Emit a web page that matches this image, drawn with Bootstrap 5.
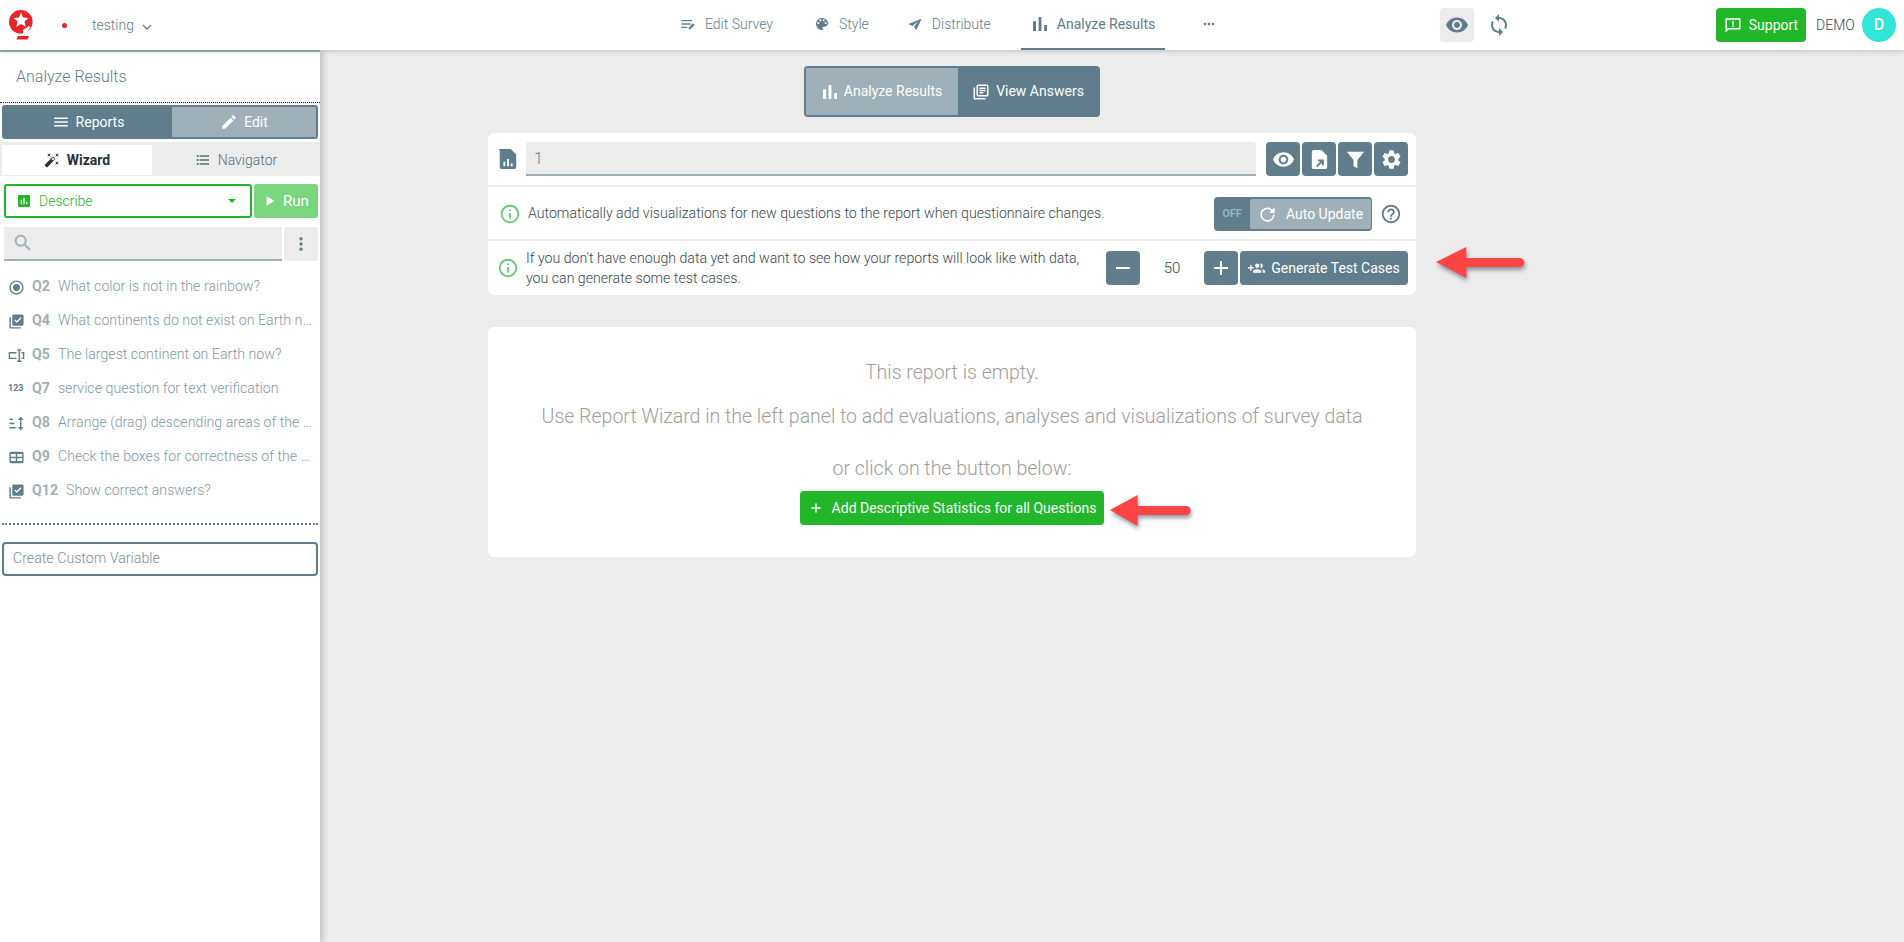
<!DOCTYPE html>
<html lang="en">
<head>
<meta charset="UTF-8">
<meta name="viewport" content="width=device-width, initial-scale=1">
<title>Analyze Results</title>
<link href="https://cdn.jsdelivr.net/npm/bootstrap@5.3.0/dist/css/bootstrap.min.css" rel="stylesheet">
<style>
    :root { --slate: #607d8b; --slate-light: #a0b0b8; --paper: #ececec; --leaf: #22b629; }
    body { font-family: Roboto, "Liberation Sans", sans-serif; font-weight: 300; font-size: 14px; background: var(--paper); color: #37474f; height: 100vh; overflow: hidden; }
    .ico { width: 1em; height: 1em; fill: currentColor; flex: none; }
    .top-bar { height: 50px; padding-right: 8px; background: #fff; box-shadow: 0 1px 5px rgba(0,0,0,.2); position: relative; z-index: 3; white-space: nowrap; }
    .brand-box { width: 669px; flex: none; padding-left: 9px; }
    .brand-dot { width: 5px; height: 5px; background: #e8232a; border-radius: 50%; margin-left: 29px; }
    .survey-name { color: var(--slate); margin-left: 25px; font-size: 14px; }
    .top-link { height: 50px; color: var(--slate); padding: 0 10px 0 11px; margin-right: 20px; gap: 9px; font-size: 14px; text-decoration: none; border-bottom: 2px solid transparent; flex: none; }
    .top-link.tight { margin-right: 17px; }
    .top-link.more { margin-left: 5px; margin-right: 0; }
    .top-link.now { border-bottom-color: var(--slate); font-weight: 400; }
    .top-link .ico { font-size: 16px; }
    .top-icon { width: 34px; height: 34px; border-radius: 4px; color: var(--slate); font-size: 24px; flex: none; }
    .top-icon.on { background: var(--paper); margin-left: auto; margin-right: 8px; }
    .btn-leaf { background: var(--leaf); color: #fff; border: 0; border-radius: 4px; height: 34px; font-size: 14px; font-weight: 400; padding: 0; }
    .btn-leaf:hover { background: var(--leaf); color: #fff; }
    .support-btn { width: 90px; margin-left: 200px; gap: 7px; flex: none; }
    .support-btn .ico { font-size: 18px; }
    .demo-name { margin-left: 10px; width: 46px; color: #37474f; flex: none; }
    .avatar { width: 34px; height: 34px; border-radius: 50%; background: #33e4d9; color: #fff; font-weight: 500; font-size: 16px; flex: none; }

    .work { height: calc(100vh - 50px); }
    .side { width: 320px; flex: none; background: #fff; border-top: 2px solid var(--slate-light); box-shadow: 3px 0 6px rgba(0,0,0,.18); position: relative; z-index: 2; }
    .side-title { height: 51px; padding-left: 16px; font-size: 16px; color: var(--slate); border-bottom: 1px dotted #222; margin-bottom: 2px; }
    .side-seg { margin: 0 2px; height: 34px; background: var(--slate); border-radius: 3px; padding: 2px; color: #fff; }
    .seg-part { flex: 1; gap: 6px; font-size: 14px; font-weight: 400; }
    .seg-part.lit { background: var(--slate-light); }
    .side-seg .seg-part { flex: none; width: 168px; }
    .side-seg .seg-part.lit { width: 144px; }
    .seg-part .ico { font-size: 18px; }
    .tab-strip { background: var(--paper); margin-top: 3px; padding: 3px 0 1px 2px; height: 34px; }
    .tab-part { flex: 1; gap: 7px; font-size: 14px; color: #546e7a; }
    .tab-part.lit { flex: none; width: 150px; background: #fff; color: #263238; font-weight: 700; }
    .tab-part .ico { font-size: 16px; }
    .run-row { margin: 8px 2px 0 4px; gap: 2px; height: 34px; }
    .pick-box { flex: 1; border: 2px solid var(--leaf); border-radius: 3px; color: var(--leaf); padding: 0 14px 0 10px; font-size: 14px; }
    .pick-box .ico { font-size: 16px; margin-right: 7px; }
    .pick-caret { margin-left: auto; border: 4px solid transparent; border-top-color: var(--leaf); border-bottom-width: 0; }
    .run-btn { width: 64px; background: #7ad67e; color: #fff; border-radius: 3px; gap: 6px; font-size: 15px; font-weight: 400; }
    .run-btn .ico { font-size: 14px; }
    .find-row { margin: 9px 2px 0 4px; gap: 2px; height: 34px; }
    .find-box { flex: 1; background: var(--paper); border-bottom: 2px solid var(--slate-light); color: var(--slate-light); padding-left: 8px; font-size: 22px; }
    .find-more { width: 34px; background: var(--paper); border-radius: 3px; color: var(--slate); font-size: 18px; }
    .q-list { margin: 9px 2px 0; padding-bottom: 15px; border-bottom: 2px dotted var(--slate); }
    .q-row { height: 34px; padding: 0 2px 0 6px; color: #829aa5; font-size: 14.2px; white-space: nowrap; overflow: hidden; }
    .q-ico { width: 17px; font-size: 17px; color: var(--slate); margin-right: 7px; flex: none; }
    .q-num { font-weight: 700; color: #a0b0b8; margin-right: 8px; flex: none; }
    .q-123 { font-size: 9px; font-weight: 700; }
    .q-text { overflow: hidden; text-overflow: ellipsis; }
    .var-box { margin: 17px 2px 0; height: 34px; border: 2px solid var(--slate); border-radius: 4px; padding-left: 9px; color: #78909c; font-size: 14.2px; }

    .stage { flex: 1; padding-left: 168px; padding-top: 16px; }
    .stage-col { width: 928px; }
    .main-seg { width: 296px; height: 51px; background: var(--slate); border-radius: 4px; padding: 2px; margin: 0 auto 16px; color: #fff; }
    .main-seg .ico { font-size: 16px; }
    .seg-a { flex: none; width: 152px; background: var(--slate-light); gap: 6px; }
    .seg-b { flex: 1; gap: 6px; }
    .main-seg .seg-b .ico { font-size: 18px; }
    .panel-row { background: #fff; margin-bottom: 2px; padding: 0 8px 0 9px; position: relative; }
    .row-a { height: 52px; border-radius: 6px 6px 0 0; }
    .row-b { height: 52px; padding-left: 11px; padding-top: 2px; }
    .row-c { height: 54px; border-radius: 0 0 6px 6px; }
    .file-ico { font-size: 22px; color: var(--slate); margin-right: 7px; }
    .name-box { flex: 1; height: 34px; padding-top: 2px; background: var(--paper); border-bottom: 2px solid var(--slate-light); border-radius: 3px 3px 0 0; color: #607d8b; font-size: 16px; padding-left: 8px; margin-right: 10px; }
    .sq-row { column-gap: 2px; }
    .sq-btn { width: 34px; height: 34px; background: var(--slate); color: #fff; border-radius: 4px; font-size: 23px; flex: none; }
    .row-c .sq-btn { font-size: 24px; }
    .info-ico { font-size: 22px; color: #6cc973; margin-right: 7px; }
    .row-text { font-size: 14.15px; }
    .off-toggle { width: 158px; height: 34px; background: var(--slate); border-radius: 4px; padding: 2px 1px 2px 0; color: #fff; margin-left: auto; flex: none; }
    .off-label { width: 36px; font-size: 11px; font-weight: 700; color: var(--slate-light); }
    .off-main { flex: 1; background: var(--slate-light); border-radius: 2px; gap: 9px; font-size: 14px; font-weight: 400; }
    .off-main .ico { font-size: 19px; }
    .help-ico { font-size: 22px; color: var(--slate); margin: 0 6px 0 8px; }
    .lead-two { line-height: 20px; width: 570px; margin-right: auto; font-size: 14.15px; }
    .count-val { width: 64px; text-align: center; font-size: 15px; flex: none; }
    .gen-btn { width: 168px; height: 34px; background: var(--slate); color: #fff; border-radius: 4px; margin-left: 2px; gap: 6px; font-size: 14px; font-weight: 400; flex: none; }
    .gen-btn .ico { font-size: 17px; }
    .empty-panel { height: 230px; background: #fff; border-radius: 6px; margin-top: 32px; color: #9e9e9e; font-size: 19.5px; padding-top: 32px; position: relative; }
    .empty-panel p { margin: 0; line-height: 28px; }
    .add-btn { width: 304px; gap: 8px; margin-top: 8px; }
    .add-btn .ico { font-size: 16px; }
    .pointer { position: absolute; height: 40px; fill: #ff4444; filter: drop-shadow(1px 3px 2px rgba(40,60,80,.5)); }
    .point-a { left: 948px; top: 2px; width: 92px; }
    .point-b { left: 622px; top: 164px; width: 84px; }
</style>
</head>
<body>
<svg class="d-none">
    <symbol id="i-eye" viewBox="0 0 24 24"><path d="M12 4.5C7 4.5 2.73 7.61 1 12c1.73 4.39 6 7.5 11 7.5s9.27-3.11 11-7.5c-1.73-4.39-6-7.5-11-7.5zM12 17c-2.76 0-5-2.24-5-5s2.24-5 5-5 5 2.24 5 5-2.24 5-5 5zm0-8c-1.66 0-3 1.34-3 3s1.34 3 3 3 3-1.34 3-3-1.34-3-3-3z"/></symbol>
    <symbol id="i-bars" viewBox="4 4 16 16"><path d="M5 9.2h3V19H5zM10.6 5h2.8v14h-2.8zm5.6 8H19v6h-2.8z"/></symbol>
    <symbol id="i-menu" viewBox="0 0 24 24"><path d="M3 18h18v-2H3v2zm0-5h18v-2H3v2zm0-7v2h18V6H3z"/></symbol>
    <symbol id="i-pen" viewBox="0 0 24 24"><path d="M3 17.25V21h3.75L17.81 9.94l-3.75-3.75L3 17.25zM20.71 7.04c.39-.39.39-1.02 0-1.41l-2.34-2.34c-.39-.39-1.02-.39-1.41 0l-1.83 1.83 3.75 3.75 1.83-1.83z"/></symbol>
    <symbol id="i-list" viewBox="0 0 24 24"><path d="M4 10.5c-.83 0-1.5.67-1.5 1.5s.67 1.5 1.5 1.5 1.5-.67 1.5-1.5-.67-1.5-1.5-1.5zm0-6c-.83 0-1.5.67-1.5 1.5S3.17 7.5 4 7.5 5.5 6.83 5.5 6 4.83 4.5 4 4.5zm0 12c-.83 0-1.5.68-1.5 1.5s.68 1.5 1.5 1.5 1.5-.68 1.5-1.5-.67-1.5-1.5-1.5zM7 19h14v-2H7v2zm0-6h14v-2H7v2zm0-8v2h14V5H7z"/></symbol>
    <symbol id="i-wand" viewBox="0 0 24 24"><path d="M7.5 5.6L10 7 8.6 4.5 10 2 7.5 3.4 5 2l1.4 2.5L5 7zm12 9.8L17 14l1.4 2.5L17 19l2.5-1.4L22 19l-1.4-2.5L22 14zM22 2l-2.5 1.4L17 2l1.4 2.5L17 7l2.5-1.4L22 7l-1.4-2.5zm-7.63 5.29c-.39-.39-1.02-.39-1.41 0L1.29 18.96c-.39.39-.39 1.02 0 1.41l2.34 2.34c.39.39 1.02.39 1.41 0L16.7 11.05c.39-.39.39-1.02 0-1.41l-2.33-2.35zm-1.03 5.49l-2.12-2.12 2.44-2.44 2.12 2.12-2.44 2.44z"/></symbol>
    <symbol id="i-play" viewBox="0 0 24 24"><path d="M6 4v16l14-8z"/></symbol>
    <symbol id="i-search" viewBox="0 0 24 24"><path d="M15.5 14h-.79l-.28-.27C15.41 12.59 16 11.11 16 9.5 16 5.91 13.09 3 9.5 3S3 5.91 3 9.5 5.91 16 9.5 16c1.61 0 3.09-.59 4.23-1.57l.27.28v.79l5 4.99L20.49 19l-4.99-5zm-6 0C7.01 14 5 11.99 5 9.5S7.01 5 9.5 5 14 7.01 14 9.5 11.99 14 9.5 14z"/></symbol>
    <symbol id="i-vert" viewBox="0 0 24 24"><circle cx="12" cy="5" r="2.200"/><circle cx="12" cy="12" r="2.200"/><circle cx="12" cy="19" r="2.200"/></symbol>
    <symbol id="i-horiz" viewBox="0 0 24 24"><circle cx="6" cy="12" r="2"/><circle cx="12" cy="12" r="2"/><circle cx="18" cy="12" r="2"/></symbol>
    <symbol id="i-radio" viewBox="0 0 24 24"><path d="M12 7c-2.76 0-5 2.24-5 5s2.24 5 5 5 5-2.24 5-5-2.24-5-5-5zm0-5C6.48 2 2 6.48 2 12s4.48 10 10 10 10-4.48 10-10S17.52 2 12 2zm0 18c-4.42 0-8-3.58-8-8s3.58-8 8-8 8 3.58 8 8-3.58 8-8 8z"/></symbol>
    <symbol id="i-check" viewBox="0 0 24 24"><path d="M20 2H8c-1.1 0-2 .9-2 2v12c0 1.1.9 2 2 2h12c1.1 0 2-.9 2-2V4c0-1.1-.9-2-2-2zm-7.53 12L9 10.5l1.4-1.41 2.07 2.08L17.6 6 19 7.41 12.47 14zM4 6H2v14c0 1.1.9 2 2 2h14v-2H4V6z"/></symbol>
    <symbol id="i-combo" viewBox="0 0 24 24"><path d="M1 7h11v2H3v6h9v2H1zM13 3h6v2h-2v14h2v2h-6v-2h2V5h-2zM19 7h4v10h-4v-2h2V9h-2z"/></symbol>
    <symbol id="i-rank" viewBox="0 0 24 24"><path d="M2 5h5v2H2zM2 11h7v2H2zM2 17h9v2H2zM18 2l4 5h-3v10h3l-4 5-4-5h3V7h-3z"/></symbol>
    <symbol id="i-grid" viewBox="0 0 24 24"><path d="M4 4h16a2 2 0 0 1 2 2v12a2 2 0 0 1-2 2H4a2 2 0 0 1-2-2V6a2 2 0 0 1 2-2zm0 3v4h7V7zm9 0v4h7V7zm-9 6v4h7v-4zm9 0v4h7v-4z" fill-rule="evenodd"/></symbol>
    <symbol id="i-chart" viewBox="0 0 24 24"><path d="M19 3H5c-1.1 0-2 .9-2 2v14c0 1.1.9 2 2 2h14c1.1 0 2-.9 2-2V5c0-1.1-.9-2-2-2zM9 17H7v-7h2v7zm4 0h-2V7h2v10zm4 0h-2v-4h2v4z"/></symbol>
    <symbol id="i-edit-lines" viewBox="0 0 24 24"><path d="M2 6h16v2H2zM2 11h14v2H2zM2 16h9v2H2zM13 20v-2.5l6.500-6.500 2.500 2.500-6.500 6.500z"/></symbol>
    <symbol id="i-palette" viewBox="0 0 24 24"><path d="M12 3c-4.970 0-9 4.030-9 9s4.030 9 9 9c.83 0 1.500-.67 1.500-1.500 0-.39-.15-.74-.39-1.010-.23-.26-.38-.61-.38-.99 0-.83.67-1.500 1.500-1.500H16c2.760 0 5-2.240 5-5 0-4.420-4.030-8-9-8zm-5.500 9c-.83 0-1.500-.67-1.500-1.500S5.670 9 6.500 9 8 9.670 8 10.500 7.330 12 6.500 12zm3-4C8.670 8 8 7.330 8 6.500S8.670 5 9.500 5s1.500.67 1.500 1.500S10.330 8 9.500 8zm5 0c-.83 0-1.500-.67-1.500-1.500S13.670 5 14.500 5s1.500.67 1.500 1.500S15.330 8 14.500 8zm3 4c-.83 0-1.500-.67-1.500-1.500S16.670 9 17.500 9s1.500.67 1.500 1.500-.67 1.500-1.500 1.500z"/></symbol>
    <symbol id="i-plane" viewBox="0 0 24 24"><path d="M22 4L2 12l6 3 9-7-7 9 1 0 3 4z"/></symbol>
    <symbol id="i-books" viewBox="0 0 24 24"><path d="M4 6H2v14c0 1.1.9 2 2 2h14v-2H4V6zm16-4H8c-1.1 0-2 .9-2 2v12c0 1.1.9 2 2 2h12c1.1 0 2-.9 2-2V4c0-1.1-.9-2-2-2zm0 14H8V4h12zM10 6h8v2h-8zm0 3h8v2h-8zm0 3h5v2h-5z" fill-rule="evenodd"/></symbol>
    <symbol id="i-sync" viewBox="0 0 24 24"><path d="M12 4V1L8 5l4 4V6c3.310 0 6 2.690 6 6 0 1.010-.25 1.970-.7 2.800l1.460 1.460C19.540 15.030 20 13.570 20 12c0-4.420-3.580-8-8-8zm0 14c-3.310 0-6-2.690-6-6 0-1.010.25-1.970.7-2.800L5.240 7.740C4.460 8.970 4 10.430 4 12c0 4.420 3.580 8 8 8v3l4-4-4-4v3z"/></symbol>
    <symbol id="i-bubble" viewBox="0 0 24 24"><path d="M2 3h20v15H6l-4 4zm2 2v12.200L5.200 16H20V5zM11 6.500h2v5h-2zM11 12.500h2v2h-2z" fill-rule="evenodd"/></symbol>
    <symbol id="i-file-chart" viewBox="0 0 24 24"><path d="M4 1h11l6 6v14a2 2 0 0 1-2 2H5a2 2 0 0 1-2-2V3a1 1 0 0 1 1-2zm3 14v5h2v-5zm4-3v8h2v-8zm4 5v3h2v-3z" fill-rule="evenodd"/></symbol>
    <symbol id="i-file-out" viewBox="0 0 24 24"><path d="M6 2h8l6 6v12a2 2 0 0 1-2 2H6a2 2 0 0 1-2-2V4a2 2 0 0 1 2-2zm4.500 10v2h2.600l-4.600 4.600 1.400 1.400 4.600-4.600V18h2v-6z" fill-rule="evenodd"/></symbol>
    <symbol id="i-filter" viewBox="0 0 24 24"><path d="M3 4h18l-7 8.500V21l-4-2v-6.500z"/></symbol>
    <symbol id="i-gear" viewBox="0 0 24 24"><path d="M19.140 12.940c.04-.3.06-.61.06-.94 0-.32-.02-.64-.07-.94l2.030-1.580c.18-.14.23-.41.12-.61l-1.920-3.320c-.12-.22-.37-.29-.59-.22l-2.390.96c-.5-.38-1.030-.7-1.620-.94l-.36-2.540c-.04-.24-.24-.41-.48-.41h-3.840c-.24 0-.43.17-.47.41l-.36 2.540c-.59.24-1.130.57-1.620.94l-2.390-.96c-.22-.08-.47 0-.59.22L2.740 8.870c-.12.21-.08.47.12.61l2.030 1.580c-.05.3-.09.63-.09.94s.02.64.07.94l-2.030 1.580c-.18.14-.23.41-.12.61l1.920 3.320c.12.22.37.29.59.22l2.390-.96c.5.38 1.030.7 1.620.94l.36 2.540c.05.24.24.41.48.41h3.840c.24 0 .44-.17.47-.41l.36-2.540c.59-.24 1.130-.56 1.620-.94l2.390.96c.22.08.47 0 .59-.22l1.920-3.320c.12-.22.07-.47-.12-.61l-2.010-1.580zM12 15.600c-1.980 0-3.600-1.620-3.600-3.600s1.620-3.600 3.600-3.600 3.600 1.620 3.600 3.600-1.620 3.600-3.600 3.600z"/></symbol>
    <symbol id="i-info" viewBox="0 0 24 24"><path d="M11 7h2v2h-2zm0 4h2v6h-2zm1-9C6.480 2 2 6.480 2 12s4.480 10 10 10 10-4.480 10-10S17.520 2 12 2zm0 18c-4.410 0-8-3.590-8-8s3.590-8 8-8 8 3.590 8 8-3.590 8-8 8z"/></symbol>
    <symbol id="i-help" viewBox="0 0 24 24"><path d="M11 18h2v-2h-2v2zm1-16C6.480 2 2 6.480 2 12s4.480 10 10 10 10-4.480 10-10S17.520 2 12 2zm0 18c-4.410 0-8-3.590-8-8s3.590-8 8-8 8 3.590 8 8-3.590 8-8 8zm0-14c-2.210 0-4 1.790-4 4h2c0-1.100.9-2 2-2s2 .9 2 2c0 2-3 1.750-3 5h2c0-2.250 3-2.500 3-5 0-2.210-1.790-4-4-4z"/></symbol>
    <symbol id="i-update" viewBox="0 0 24 24"><path d="M21 10.120h-6.780l2.740-2.820c-2.730-2.700-7.150-2.800-9.880-.1-2.730 2.710-2.730 7.080 0 9.790s7.150 2.710 9.880 0C18.320 15.650 19 14.080 19 12.100h2c0 1.980-.88 4.550-2.640 6.290-3.510 3.480-9.210 3.480-12.720 0-3.500-3.470-3.530-9.110-.02-12.580s9.140-3.470 12.650 0L21 3v7.120z"/></symbol>
    <symbol id="i-people" viewBox="0 0 24 24"><path d="M8 10H5V7H3v3H0v2h3v3h2v-3h3v-2zm10 1c1.660 0 2.990-1.340 2.990-3S19.660 5 18 5c-.32 0-.63.05-.91.14.57.81.9 1.790.9 2.860s-.34 2.040-.9 2.860c.28.09.59.14.91.14zm-5 0c1.660 0 2.990-1.340 2.990-3S14.660 5 13 5s-3 1.340-3 3 1.340 3 3 3zm6.620 2.160c.83.73 1.380 1.660 1.380 2.840v2h3v-2c0-1.540-2.370-2.490-4.380-2.840zM13 13c-2 0-6 1-6 3v2h12v-2c0-2-4-3-6-3z"/></symbol>
    <symbol id="i-plus" viewBox="0 0 24 24"><path d="M19 13h-6v6h-2v-6H5v-2h6V5h2v6h6v2z"/></symbol>
    <symbol id="i-minus" viewBox="0 0 24 24"><path d="M19 13H5v-2h14v2z"/></symbol>
    <symbol id="i-arrow" viewBox="0 0 88 40" preserveAspectRatio="none"><path d="M0 19L29 4v11h51a4 4 0 0 1 0 9H29v11z"/></symbol>
</svg>

<header class="top-bar d-flex align-items-center">
    <div class="brand-box d-flex align-items-center">
        <svg width="24" height="30" viewBox="0 0 24 30">
            <circle cx="11.800" cy="11.800" r="11.800" fill="#e8232a"/>
            <path fill="#fff" d="M12 2.500l2 5 5.500.5-4.100 3.500 1.300 5.300-4.700-2.900-4.700 2.900 1.300-5.300L4.500 8l5.500-.5z"/>
            <path fill="#fff" d="M14 20l6-4 1.500 1-4.500 7h-3z"/>
            <path fill="#e8232a" d="M9 26h11l-1.500 3.500H7.500z"/>
        </svg>
        <span class="brand-dot"></span>
        <span class="survey-name">testing</span>
        <svg class="ms-2 mt-1" width="10" height="6" viewBox="0 0 10 6"><path d="M1 1l4 4 4-4" fill="none" stroke="#607d8b" stroke-width="1.300"/></svg>
    </div>
    <a class="top-link d-flex align-items-center"><svg class="ico"><use href="#i-edit-lines"/></svg>Edit Survey</a>
    <a class="top-link tight d-flex align-items-center"><svg class="ico"><use href="#i-palette"/></svg>Style</a>
    <a class="top-link d-flex align-items-center"><svg class="ico"><use href="#i-plane"/></svg>Distribute</a>
    <a class="top-link now d-flex align-items-center"><svg class="ico"><use href="#i-bars"/></svg>Analyze Results</a>
    <a class="top-link more d-flex align-items-center"><svg class="ico"><use href="#i-horiz"/></svg></a>
    <span class="top-icon on d-flex align-items-center justify-content-center"><svg class="ico"><use href="#i-eye"/></svg></span>
    <span class="top-icon d-flex align-items-center justify-content-center"><svg class="ico"><use href="#i-sync"/></svg></span>
    <button class="btn btn-leaf support-btn d-flex align-items-center justify-content-center"><svg class="ico"><use href="#i-bubble"/></svg>Support</button>
    <span class="demo-name">DEMO</span>
    <span class="avatar d-flex align-items-center justify-content-center">D</span>
</header>

<div class="work d-flex">
    <aside class="side">
        <div class="side-title d-flex align-items-center">Analyze Results</div>
        <div class="side-seg d-flex">
            <span class="seg-part d-flex align-items-center justify-content-center"><svg class="ico"><use href="#i-menu"/></svg>Reports</span>
            <span class="seg-part lit d-flex align-items-center justify-content-center"><svg class="ico"><use href="#i-pen"/></svg>Edit</span>
        </div>
        <div class="tab-strip d-flex">
            <span class="tab-part lit d-flex align-items-center justify-content-center"><svg class="ico"><use href="#i-wand"/></svg>Wizard</span>
            <span class="tab-part d-flex align-items-center justify-content-center"><svg class="ico"><use href="#i-list"/></svg>Navigator</span>
        </div>
        <div class="run-row d-flex">
            <div class="pick-box d-flex align-items-center"><svg class="ico"><use href="#i-chart"/></svg>Describe<span class="pick-caret"></span></div>
            <div class="run-btn d-flex align-items-center justify-content-center"><svg class="ico"><use href="#i-play"/></svg>Run</div>
        </div>
        <div class="find-row d-flex">
            <div class="find-box d-flex align-items-center"><svg class="ico"><use href="#i-search"/></svg></div>
            <div class="find-more d-flex align-items-center justify-content-center"><svg class="ico"><use href="#i-vert"/></svg></div>
        </div>
        <div class="q-list">
            <div class="q-row d-flex align-items-center"><span class="q-ico d-flex"><svg class="ico"><use href="#i-radio"/></svg></span><span class="q-num">Q2</span><span class="q-text">What color is not in the rainbow?</span></div>
            <div class="q-row d-flex align-items-center"><span class="q-ico d-flex"><svg class="ico"><use href="#i-check"/></svg></span><span class="q-num">Q4</span><span class="q-text">What continents do not exist on Earth now?</span></div>
            <div class="q-row d-flex align-items-center"><span class="q-ico d-flex"><svg class="ico"><use href="#i-combo"/></svg></span><span class="q-num">Q5</span><span class="q-text">The largest continent on Earth now?</span></div>
            <div class="q-row d-flex align-items-center"><span class="q-ico q-123 d-flex">123</span><span class="q-num">Q7</span><span class="q-text">service question for text verification</span></div>
            <div class="q-row d-flex align-items-center"><span class="q-ico d-flex"><svg class="ico"><use href="#i-rank"/></svg></span><span class="q-num">Q8</span><span class="q-text">Arrange (drag) descending areas of the continents</span></div>
            <div class="q-row d-flex align-items-center"><span class="q-ico d-flex"><svg class="ico"><use href="#i-grid"/></svg></span><span class="q-num">Q9</span><span class="q-text">Check the boxes for correctness of the statements</span></div>
            <div class="q-row d-flex align-items-center"><span class="q-ico d-flex"><svg class="ico"><use href="#i-check"/></svg></span><span class="q-num">Q12</span><span class="q-text">Show correct answers?</span></div>
        </div>
        <div class="var-box d-flex align-items-center">Create Custom Variable</div>
    </aside>

    <main class="stage">
        <div class="stage-col">
            <div class="main-seg d-flex">
                <span class="seg-a seg-part d-flex align-items-center justify-content-center"><svg class="ico"><use href="#i-bars"/></svg>Analyze Results</span>
                <span class="seg-b seg-part d-flex align-items-center justify-content-center"><svg class="ico"><use href="#i-books"/></svg>View Answers</span>
            </div>
            <div class="panel-row row-a d-flex align-items-center">
                <svg class="ico file-ico"><use href="#i-file-chart"/></svg>
                <div class="name-box d-flex align-items-center">1</div>
                <div class="sq-row d-flex">
                    <span class="sq-btn d-flex align-items-center justify-content-center"><svg class="ico"><use href="#i-eye"/></svg></span>
                    <span class="sq-btn d-flex align-items-center justify-content-center"><svg class="ico"><use href="#i-file-out"/></svg></span>
                    <span class="sq-btn d-flex align-items-center justify-content-center"><svg class="ico"><use href="#i-filter"/></svg></span>
                    <span class="sq-btn d-flex align-items-center justify-content-center"><svg class="ico"><use href="#i-gear"/></svg></span>
                </div>
            </div>
            <div class="panel-row row-b d-flex align-items-center">
                <svg class="ico info-ico"><use href="#i-info"/></svg>
                <span class="row-text">Automatically add visualizations for new questions to the report when questionnaire changes.</span>
                <div class="off-toggle d-flex">
                    <span class="off-label d-flex align-items-center justify-content-center">OFF</span>
                    <span class="off-main d-flex align-items-center justify-content-center"><svg class="ico"><use href="#i-update"/></svg>Auto Update</span>
                </div>
                <svg class="ico help-ico"><use href="#i-help"/></svg>
            </div>
            <div class="panel-row row-c d-flex align-items-center">
                <svg class="ico info-ico"><use href="#i-info"/></svg>
                <span class="lead-two">If you don't have enough data yet and want to see how your reports will look like with data, you can generate some test cases.</span>
                <span class="sq-btn d-flex align-items-center justify-content-center"><svg class="ico"><use href="#i-minus"/></svg></span>
                <span class="count-val">50</span>
                <span class="sq-btn d-flex align-items-center justify-content-center"><svg class="ico"><use href="#i-plus"/></svg></span>
                <span class="gen-btn d-flex align-items-center justify-content-center"><svg class="ico"><use href="#i-people"/></svg>Generate Test Cases</span>
                <svg class="pointer point-a"><use href="#i-arrow"/></svg>
            </div>
            <div class="empty-panel d-flex flex-column align-items-center">
                <p>This report is empty.</p>
                <p class="mt-3">Use Report Wizard in the left panel to add evaluations, analyses and visualizations of survey data</p>
                <p class="mt-4">or click on the button below:</p>
                <button class="btn btn-leaf add-btn d-flex align-items-center justify-content-center"><svg class="ico"><use href="#i-plus"/></svg>Add Descriptive Statistics for all Questions</button>
                <svg class="pointer point-b"><use href="#i-arrow"/></svg>
            </div>
        </div>
    </main>
</div>
<script src="https://cdn.jsdelivr.net/npm/bootstrap@5.3.0/dist/js/bootstrap.bundle.min.js"></script>
</body>
</html>
